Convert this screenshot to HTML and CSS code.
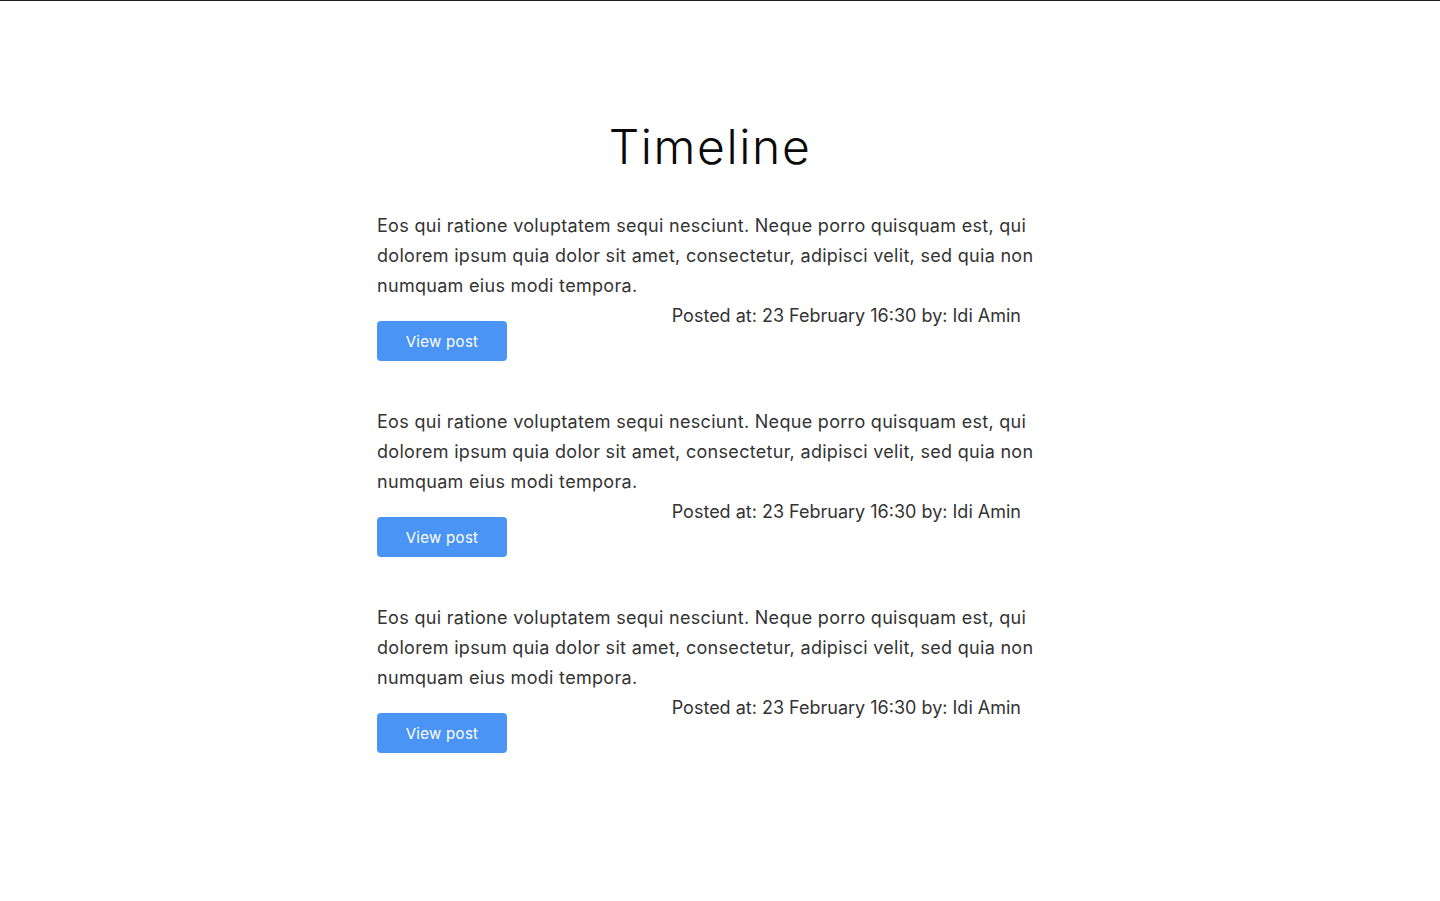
FILE: index.html
```html
<!DOCTYPE html>
<html lang="en">
<head>
<meta charset="utf-8">
<title>Timeline</title>
<link rel="stylesheet" href="styles.css">
</head>
<body>
<main class="timeline">
  <h1 class="title">Timeline</h1>
  <article class="post">
    <p class="post-body">Eos qui ratione voluptatem sequi nesciunt. Neque porro quisquam est, qui dolorem ipsum quia dolor sit amet, consectetur, adipisci velit, sed quia non numquam eius modi tempora.</p>
    <div class="post-meta">Posted at: 23 February 16:30 by: Idi Amin</div>
    <a class="btn" href="#">View post</a>
  </article>
  <article class="post">
    <p class="post-body">Eos qui ratione voluptatem sequi nesciunt. Neque porro quisquam est, qui dolorem ipsum quia dolor sit amet, consectetur, adipisci velit, sed quia non numquam eius modi tempora.</p>
    <div class="post-meta">Posted at: 23 February 16:30 by: Idi Amin</div>
    <a class="btn" href="#">View post</a>
  </article>
  <article class="post">
    <p class="post-body">Eos qui ratione voluptatem sequi nesciunt. Neque porro quisquam est, qui dolorem ipsum quia dolor sit amet, consectetur, adipisci velit, sed quia non numquam eius modi tempora.</p>
    <div class="post-meta">Posted at: 23 February 16:30 by: Idi Amin</div>
    <a class="btn" href="#">View post</a>
  </article>
</main>
</body>
</html>
```
FILE: styles.css
```css
html {
  border-top: 1px solid #1f1f1f;
  background: #fff;
}
body {
  margin: 0;
  padding: 0 20px 0 0;
  font-family: "Inter", "Liberation Sans", sans-serif;
  color: #333;
}
.timeline {
  width: 666px;
  margin: 0 auto;
  padding-top: 117px;
}
.title {
  margin: 0 0 35px;
  font-size: 48px;
  font-weight: 300;
  line-height: 58px;
  letter-spacing: 1.6px;
  text-align: center;
  color: #0a0a0a;
}
.post {
  display: flex;
  flex-direction: column;
  align-items: flex-start;
  margin-bottom: 46px;
}
.post-body {
  margin: 0;
  font-size: 18px;
  line-height: 30px;
  letter-spacing: 0.3px;
}
.post-meta {
  align-self: stretch;
  height: 20px;
  padding-right: 22px;
  font-size: 18px;
  line-height: 29px;
  letter-spacing: 0;
  text-align: right;
}
.btn {
  display: flex;
  align-items: center;
  justify-content: center;
  width: 130px;
  height: 40px;
  border-radius: 4px;
  background: #4a94f5;
  color: #fff;
  font-size: 15px;
  letter-spacing: 0.3px;
  text-decoration: none;
}
```
